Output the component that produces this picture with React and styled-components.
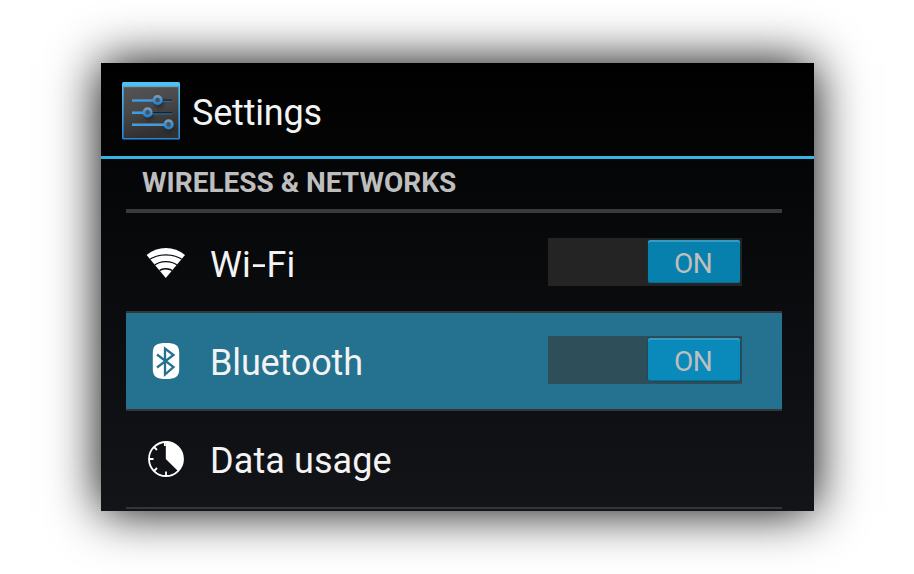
import React from "react";
import styled, { createGlobalStyle } from "styled-components";

const GlobalStyle = createGlobalStyle`
  html, body { margin: 0; padding: 0; background: #fff; overflow: hidden; }
  * { box-sizing: border-box; }
  body { font-family: Roboto, "Noto Sans", sans-serif; }
`;

const Stage = styled.main`
  width: 914px;
  height: 574px;
  padding: 63px 100px 63px 101px;
  overflow: hidden;
`;

const Panel = styled.section`
  width: 713px;
  height: 448px;
  overflow: hidden;
  background: linear-gradient(#000 0%, #08090b 40%, #131418 100%);
  box-shadow: 0 0 48px #000;
`;

const Header = styled.header`
  display: flex;
  align-items: center;
  gap: 12px;
  height: 96px;
  padding: 2px 0 0 21px;
  border-bottom: 3px solid #33b5e5;
`;

const Title = styled.h1`
  margin: 0;
  padding-top: 5px;
  font-size: 36px;
  line-height: 42px;
  font-weight: 400;
  letter-spacing: -0.2px;
  color: #f3f3f3;
`;

const List = styled.div`
  margin: 0 32px 0 25px;
`;

const SectionTitle = styled.h2`
  margin: 0;
  height: 54px;
  padding: 7px 0 0 16px;
  border-bottom: 4px solid #3a3a3b;
  font-size: 28px;
  line-height: 33px;
  font-weight: 700;
  color: #bebebe;
`;

const Row = styled.div`
  display: flex;
  align-items: center;
  height: 98px;
  padding: ${(p) => (p.$selected ? "0 40px 2px 20px" : "0 40px 0 20px")};
  border-bottom: 2px solid #343537;
  background: ${(p) => (p.$selected ? "#24728f" : "transparent")};

  &:first-of-type { height: 100px; }
`;

const IconSlot = styled.span`
  display: flex;
  justify-content: center;
  width: 40px;
  padding-top: ${(p) => p.$drop || 0}px;
  margin-right: 24px;
`;

const Label = styled.span`
  flex: 1;
  padding-top: ${(p) => p.$drop}px;
  font-size: 36px;
  line-height: 42px;
  letter-spacing: ${(p) => p.$tracking}px;
  color: #f3f3f3;
  white-space: nowrap;
`;

const WideHyphen = styled.span`
  display: inline-block;
  width: 15.8px;
  text-align: center;
  transform: scaleX(1.4);
`;

const Track = styled.span`
  display: flex;
  justify-content: flex-end;
  width: 194px;
  height: 48px;
  padding: 2px 2.5px 3px;
  background: ${(p) => (p.$selected ? "#2e4e5a" : "#242424")};
`;

const Thumb = styled.span`
  width: 91.5px;
  height: 43px;
  padding: 3px 1.5px 0 0;
  border-radius: 2.5px;
  background: ${(p) => (p.$selected ? "#098aba" : "#0880ad")};
  box-shadow: inset 0 2px 0 #359bc0, inset 0 -1px 0 #086d91, 0 0 2px #0b4055;
  font-size: 28px;
  line-height: 41px;
  letter-spacing: -0.5px;
  text-align: center;
  color: #bebebe;
`;

function Switch({ selected }) {
  return (
    <Track $selected={selected}>
      <Thumb $selected={selected}>ON</Thumb>
    </Track>
  );
}

function SlidersIcon() {
  return (
    <svg width="58" height="58" viewBox="0 0 58 58">
      <defs>
        <linearGradient id="face" x1="0" y1="0" x2="0.3" y2="1">
          <stop offset="0" stopColor="#555" />
          <stop offset="0.5" stopColor="#484848" />
          <stop offset="1" stopColor="#303030" />
        </linearGradient>
        <linearGradient id="edge" x1="0" y1="0" x2="0" y2="1">
          <stop offset="0" stopColor="#4ac6f5" />
          <stop offset="1" stopColor="#2387df" />
        </linearGradient>
        <linearGradient id="knob" x1="0" y1="0" x2="0" y2="1">
          <stop offset="0" stopColor="#7898b4" />
          <stop offset="0.45" stopColor="#3b93d8" />
          <stop offset="1" stopColor="#2583d3" />
        </linearGradient>
        <filter id="soft" x="-50%" y="-50%" width="200%" height="200%">
          <feGaussianBlur stdDeviation="1.4" />
        </filter>
      </defs>
      <rect width="58" height="57.5" rx="1.5" fill="url(#edge)" />
      <rect x="1.6" y="4" width="54.8" height="52" fill="url(#face)" />
      <rect x="1.6" y="4" width="54.8" height="1.2" fill="#789db2" />
      <g fill="#222" opacity="0.6" filter="url(#soft)">
        <circle cx="37" cy="22" r="5" />
        <circle cx="27" cy="34" r="5" />
        <circle cx="47" cy="46" r="5" />
      </g>
      <g fill="none" strokeWidth="2.2">
        <path d="M10 18.5h40M10 31h40" stroke="#17202c" />
        <path d="M37 19.3h13M27 31.8h23" stroke="#316791" strokeWidth="1.2" />
        <path d="M10 18.7h22M10 31h12M10 43h32" stroke="#3c9ee8" />
        <path d="M10 17.4h22M10 29.7h12M10 41.7h32" stroke="#6786a3" strokeWidth="0.8" />
      </g>
      <g fill="#4a5054" stroke="url(#knob)" strokeWidth="2.8">
        <circle cx="35.6" cy="18" r="3.7" />
        <circle cx="25.6" cy="30.4" r="3.7" />
        <circle cx="46.6" cy="42.4" r="3.7" />
      </g>
    </svg>
  );
}

function WifiIcon() {
  return (
    <svg width="40" height="32" viewBox="0 0 40 32">
      <defs>
        <clipPath id="fan">
          <path d="M.6 8Q9 1 19.8 1T39 8L19.8 31Z" />
        </clipPath>
      </defs>
      <g clipPath="url(#fan)">
        <rect width="40" height="32" fill="#fff" />
        <g fill="none" stroke="#0a0b0d" strokeWidth="1.4">
          <path d="M2 13.5Q10 7.9 19.8 7.9T38 13.5" />
          <path d="M7 19.2Q12.5 14.6 19.8 14.6T33 19.2" />
          <path d="M12 25Q15 21.8 19.8 21.8T28 25" />
        </g>
      </g>
    </svg>
  );
}

function BluetoothIcon() {
  return (
    <svg width="28" height="38" viewBox="0 0 28 38">
      <path
        d="M14 1C23 1 27.2 3 27.2 11V27C27.2 35 23 37 14 37S.8 35 .8 27V11C.8 3 5 1 14 1Z"
        fill="#fff"
      />
      <path
        d="M5 12.5L21.5 25L13 32.5V6.5L21.5 13L5 25.5"
        fill="none"
        stroke="#24728f"
        strokeWidth="2.3"
      />
    </svg>
  );
}

function DataUsageIcon() {
  return (
    <svg width="38" height="38" viewBox="0 0 38 38">
      <circle cx="19" cy="19" r="17" fill="none" stroke="#fff" strokeWidth="1.8" />
      <path d="M18.8 19V1.5A17.5 17.5 0 0 1 31.2 31.2Z" fill="#fff" />
      <path
        d="M17.9 2V6M2 19H6.5M19 36V31.5M7 7L10 10M7 31L10 28"
        stroke="#fff"
        strokeWidth="1.8"
        fill="none"
      />
    </svg>
  );
}

const rows = [
  {
    id: "wifi",
    label: (
      <>
        Wi<WideHyphen>-</WideHyphen>Fi
      </>
    ),
    Icon: WifiIcon,
    iconDrop: 2,
    toggle: true,
    tracking: 0,
    drop: 6,
  },
  {
    id: "bluetooth",
    label: "Bluetooth",
    Icon: BluetoothIcon,
    iconDrop: 1,
    toggle: true,
    selected: true,
    tracking: -0.15,
    drop: 6,
  },
  { id: "data", label: "Data usage", Icon: DataUsageIcon, tracking: 0.1, drop: 4 },
];

export default function App() {
  return (
    <>
      <GlobalStyle />
      <Stage>
        <Panel>
          <Header>
            <SlidersIcon />
            <Title>Settings</Title>
          </Header>
          <List>
            <SectionTitle>WIRELESS &amp; NETWORKS</SectionTitle>
            {rows.map(({ id, label, Icon, iconDrop, toggle, selected, tracking, drop }) => (
              <Row key={id} $selected={selected}>
                <IconSlot $drop={iconDrop}>
                  <Icon />
                </IconSlot>
                <Label $tracking={tracking} $drop={drop}>
                  {label}
                </Label>
                {toggle && <Switch selected={selected} />}
              </Row>
            ))}
          </List>
        </Panel>
      </Stage>
    </>
  );
}
